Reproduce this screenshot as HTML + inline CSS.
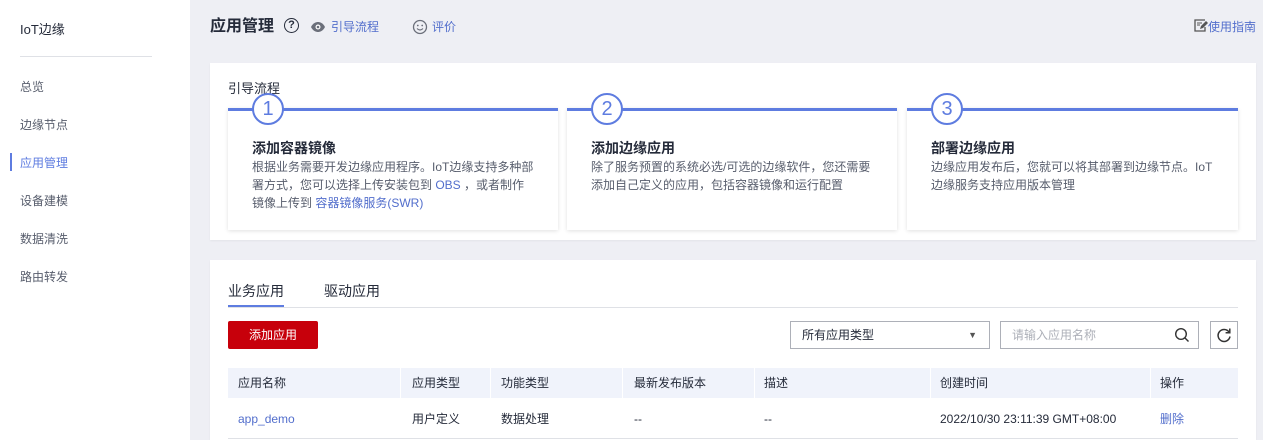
<!DOCTYPE html>
<html><head><meta charset="utf-8"><style>
*{margin:0;padding:0;box-sizing:border-box}
body{width:1263px;height:440px;overflow:hidden;background:#eeeff4;font-family:"Liberation Sans","Noto Sans CJK SC",sans-serif;font-size:12px;color:#252b3a;position:relative}
.a{position:absolute}
.side{left:0;top:0;width:190px;height:440px;background:#fff}
.nav{left:20px;font-size:12px;color:#575d6c}
.card{background:#fff;box-shadow:0 1px 2px rgba(0,0,0,.05)}
.step{background:#fff;box-shadow:0 1px 4px rgba(0,0,0,.12);border-top:3px solid #5e7ce0;top:108px;height:122px}
.circ{width:32px;height:32px;border:2px solid #5e7ce0;border-radius:50%;background:#fff;color:#5e7ce0;font-size:20px;text-align:center;line-height:28px;top:-18px;left:24px}
.st{font-size:14px;font-weight:bold;color:#252b3a;left:24px;top:27px}
.sd{left:24px;top:47px;width:284px;line-height:18px;color:#575d6c;font-size:12px}
.lk{color:#526ecc}
.th{top:368px;height:30px;background:#f0f3fb;left:228px;width:1010px}
.th span,.tr span{position:absolute;top:7px;line-height:16px}
.sep{position:absolute;top:0;width:1px;height:30px;background:#fff}
</style></head><body>
<div class="a side"></div>
<div class="a" style="left:20px;top:19px;font-size:13px;color:#252b3a">IoT边缘</div>
<div class="a" style="left:20px;top:56px;width:132px;height:1px;background:#dfe1e6"></div>
<div class="a nav" style="top:78px">总览</div>
<div class="a nav" style="top:116px">边缘节点</div>
<div class="a" style="left:10px;top:153px;width:2px;height:18px;background:#5e7ce0"></div>
<div class="a nav" style="top:154px;color:#5e7ce0">应用管理</div>
<div class="a nav" style="top:192px">设备建模</div>
<div class="a nav" style="top:230px">数据清洗</div>
<div class="a nav" style="top:268px">路由转发</div>

<div class="a" style="left:210px;top:16px;font-size:16px;font-weight:bold;line-height:22px">应用管理</div>
<div class="a" style="left:284px;top:18px;width:15px;height:15px;border:1.5px solid #252b3a;border-radius:50%;font-size:11px;font-weight:bold;text-align:center;line-height:12px">?</div>
<svg class="a" style="left:310px;top:21px" width="16" height="12" viewBox="0 0 16 12"><path d="M1 6C3 2 6 1 8 1s5 1 7 5c-2 4-5 5-7 5S3 10 1 6z" fill="#6b6f7a"/><circle cx="8" cy="6" r="2.5" fill="#fff"/><circle cx="8" cy="6" r="1.3" fill="#6b6f7a"/></svg>
<div class="a lk" style="left:331px;top:18px">引导流程</div>
<svg class="a" style="left:412px;top:19px" width="16" height="16" viewBox="0 0 16 16"><circle cx="8" cy="8" r="6.5" fill="none" stroke="#6b6f7a" stroke-width="1.3"/><circle cx="5.8" cy="6.5" r=".9" fill="#6b6f7a"/><circle cx="10.2" cy="6.5" r=".9" fill="#6b6f7a"/><path d="M5 9.5q3 3 6 0" fill="none" stroke="#6b6f7a" stroke-width="1.2"/></svg>
<div class="a lk" style="left:432px;top:18px">评价</div>
<svg class="a" style="left:1194px;top:19px" width="14" height="13" viewBox="0 0 14 13"><path d="M11 1H1v11h10V8" fill="none" stroke="#555" stroke-width="1.3"/><path d="M3 4h5M3 6h3" stroke="#555"/><path d="M6 10l1-3 5-5 2 2-5 5z" fill="#555"/></svg>
<div class="a lk" style="left:1208px;top:18px">使用指南</div>

<div class="a card" style="left:210px;top:63px;width:1046px;height:177px"></div>
<div class="a" style="left:228px;top:78px;font-size:13px">引导流程</div>
<div class="a step" style="left:228px;width:330px"><div class="a circ">1</div><div class="a st">添加容器镜像</div><div class="a sd">根据业务需要开发边缘应用程序。IoT边缘支持多种部署方式，您可以选择上传安装包到 <span class="lk">OBS</span> ，或者制作镜像上传到 <span class="lk">容器镜像服务(SWR)</span></div></div>
<div class="a step" style="left:567px;width:330px"><div class="a circ">2</div><div class="a st">添加边缘应用</div><div class="a sd" style="width:282px">除了服务预置的系统必选/可选的边缘软件，您还需要添加自己定义的应用，包括容器镜像和运行配置</div></div>
<div class="a step" style="left:907px;width:331px"><div class="a circ">3</div><div class="a st">部署边缘应用</div><div class="a sd" style="width:290px">边缘应用发布后，您就可以将其部署到边缘节点。IoT边缘服务支持应用版本管理</div></div>

<div class="a card" style="left:210px;top:260px;width:1046px;height:180px"></div>
<div class="a" style="left:228px;top:281px;font-size:14px;color:#252b3a">业务应用</div>
<div class="a" style="left:228px;top:305px;width:56px;height:2px;background:#5e7ce0"></div>
<div class="a" style="left:324px;top:281px;font-size:14px;color:#252b3a">驱动应用</div>
<div class="a" style="left:228px;top:307px;width:1010px;height:1px;background:#dfe1e6"></div>
<div class="a" style="left:228px;top:321px;width:90px;height:28px;background:#c7000b;color:#fff;text-align:center;line-height:28px;border-radius:2px">添加应用</div>
<div class="a" style="left:790px;top:321px;width:200px;height:28px;border:1px solid #adb0b8;padding:0 11px;line-height:26px">所有应用类型<span style="position:absolute;right:12px;top:0;font-size:9px;color:#555">▼</span></div>
<div class="a" style="left:1000px;top:321px;width:199px;height:28px;border:1px solid #adb0b8;padding:0 11px;line-height:26px;color:#adb0b8">请输入应用名称</div>
<svg class="a" style="left:1174px;top:327px" width="16" height="16" viewBox="0 0 16 16"><circle cx="7" cy="7" r="5.3" fill="none" stroke="#333" stroke-width="1.4"/><path d="M11 11l3.5 3.5" stroke="#333" stroke-width="1.4"/></svg>
<div class="a" style="left:1210px;top:321px;width:28px;height:28px;border:1px solid #adb0b8"></div>
<svg class="a" style="left:1216px;top:327px" width="16" height="16" viewBox="0 0 16 16"><path d="M13 5A6 6 0 1 0 14 9.5" fill="none" stroke="#333" stroke-width="1.5"/><path d="M13.8 1.5v4.2H9.6" fill="none" stroke="#333" stroke-width="1.5"/></svg>

<div class="a th">
<span style="left:10px">应用名称</span><div class="sep" style="left:172px"></div>
<span style="left:184px">应用类型</span><div class="sep" style="left:262px"></div>
<span style="left:273px">功能类型</span><div class="sep" style="left:394px"></div>
<span style="left:406px">最新发布版本</span><div class="sep" style="left:526px"></div>
<span style="left:536px">描述</span><div class="sep" style="left:702px"></div>
<span style="left:712px">创建时间</span><div class="sep" style="left:922px"></div>
<span style="left:932px">操作</span>
</div>
<div class="a tr" style="top:398px;left:228px;width:1010px;height:41px;border-bottom:1px solid #dfe1e6">
<span class="lk" style="left:10px;top:13px">app_demo</span>
<span style="left:184px;top:13px">用户定义</span>
<span style="left:273px;top:13px">数据处理</span>
<span style="left:406px;top:13px">--</span>
<span style="left:536px;top:13px">--</span>
<span style="left:712px;top:13px">2022/10/30 23:11:39 GMT+08:00</span>
<span class="lk" style="left:932px;top:13px">删除</span>
</div>
</body></html>
